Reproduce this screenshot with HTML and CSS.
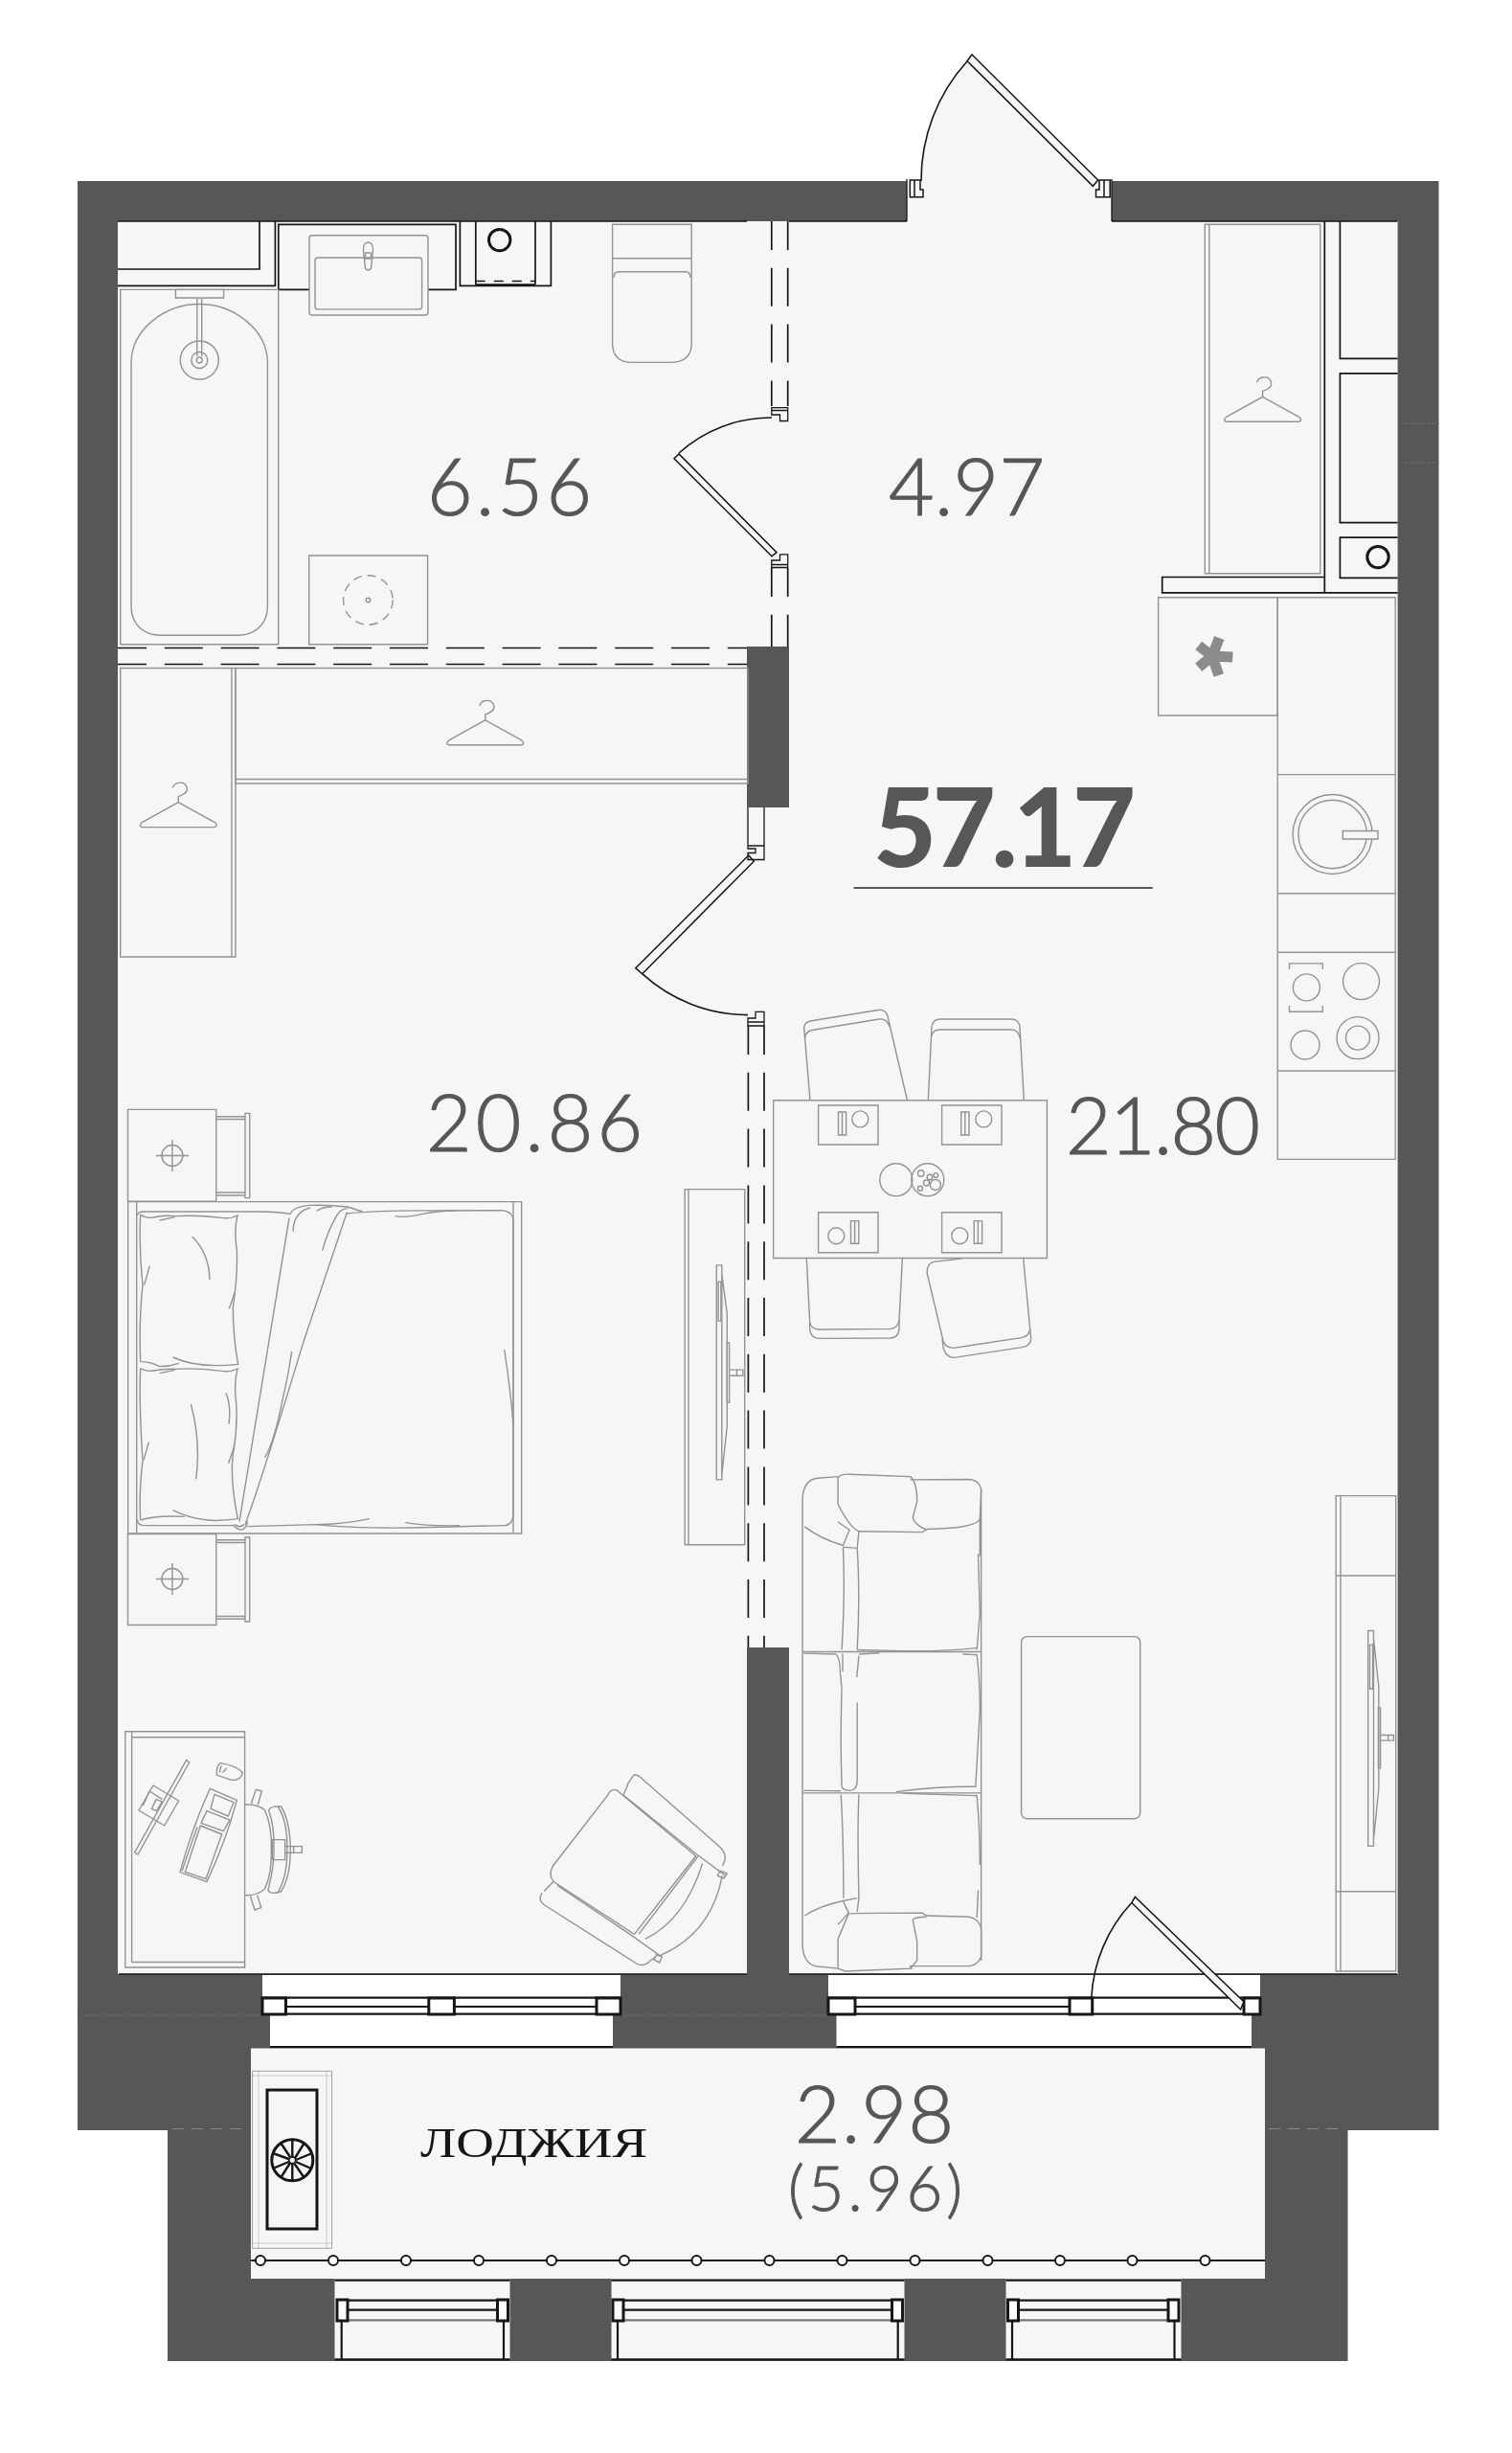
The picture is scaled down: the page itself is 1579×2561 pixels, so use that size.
FILE: index.html
```html
<!DOCTYPE html>
<html lang="ru">
<head>
    <meta charset="UTF-8">
    <title>Планировка</title>
    <link rel="stylesheet" href="styles.css">
</head>
<body>
<svg class="plan" viewBox="0 0 1579 2561" xmlns="http://www.w3.org/2000/svg">
    <defs>
        <g id="hanger">
            <path d="M0 0V-6Q10 -9 9 -15Q7 -22 -1 -20Q-5 -19 -6 -15M0 0L38 21Q42 25 38 26H-38Q-42 25 -38 21Z"/>
        </g>
    </defs>

    <!-- walls and floors -->
    <path class="wall" d="M81 189H1502.5V2224H1407.5V2465H175V2224H81Z"/>
    <rect class="floor" x="123" y="231" width="1336.6" height="830"/>
    <rect class="floor" x="123" y="1061" width="1336.6" height="1000"/>
    <rect class="floor" x="947" y="189" width="214" height="42"/>
    <path class="floor" d="M962 189A185 185 0 0 1 1010 64L1146 190Z"/>
    <rect class="wall" x="780" y="675" width="44" height="168"/>
    <rect class="wall" x="780" y="1720" width="44" height="341"/>

    <!-- window recesses -->
    <rect class="glass" x="274" y="2062" width="374" height="41"/>
    <rect class="glass" x="282" y="2103" width="358" height="34"/>
    <rect class="glass" x="865" y="2062" width="451" height="41"/>
    <rect class="glass" x="873.5" y="2103" width="433.5" height="34"/>
    <rect class="floor" x="262" y="2138.5" width="1059" height="240.5"/>
    <rect class="floor" x="349.5" y="2379" width="183" height="84"/>
    <rect class="floor" x="638.5" y="2379" width="306" height="84"/>
    <rect class="floor" x="1050.5" y="2379" width="183" height="84"/>

    <!-- hairlines left in the wall fill -->
    <g class="seam">
        <path d="M85 2104H273M650 2104H864"/>
        <path d="M1466 442H1503M1466 483H1503"/>
        <path d="M180 2222.5H256M1325 2222.5H1404" stroke-dasharray="12 8"/>
    </g>

    <!-- black lines: room edges, shafts, windows -->
    <g class="ink">
        <path d="M123 231H780M824 231H947M1161 231H1459M124 2061H780M824 2061H1459"/>
        <path d="M123 298.4H287.4V231M123 281H271V231"/>
        <rect x="290.8" y="234.3" width="185.2" height="68.1"/>
        <path d="M480.4 231V298.4H575.4V231M496.8 231V297M559 231V297M496.8 297H559"/>
        <path d="M496.8 293.5H559" stroke-dasharray="10 9"/>
        <circle class="heavy" cx="521.7" cy="250.6" r="11.2"/>
        <path d="M1383.3 231V618.8H1213.7V602.5H1383.3M1383.3 618.8H1459.6"/>
        <path d="M1459.6 374.3H1399.4V231M1459.6 389.8H1399.4V545.7H1459.6M1459.6 561.2H1399.4V603.3H1459.6"/>
        <circle class="heavy" cx="1439" cy="581.6" r="11.2"/>
    </g>

    <!-- interior partitions -->
    <g class="ink dashed">
        <path d="M805.8 231V424M822.7 231V424"/>
        <path d="M805.8 593V675M822.7 593V675"/>
        <path d="M123 676.5H780M123 693.5H780"/>
        <path d="M781.4 1071V1720M798 1071V1720"/>
    </g>
    <g class="door">
        <path class="swing" d="M806 436A144 144 0 0 0 709 473"/>
        <path class="leaf" d="M704 478.8L709 473.9L811 576.7L806 580.8Z"/>
        <path d="M805.8 425.7H822.7V439.5H814.5V433H805.8ZM805.8 428.5H822.7"/>
        <path d="M805.8 592.5H822.7V578.8H814.5V585H805.8ZM805.8 589.5H822.7"/>
        <path class="swing" d="M670.7 1016.7A164 164 0 0 0 781 1059.6"/>
        <path class="leaf" d="M781.8 893L787.3 899.2L670.7 1016.7L663.8 1010.6Z"/>
        <path d="M781 843V883H798V843M781 883H798V897.5H781V890.5H789V886H781Z"/>
        <path d="M781 1071V1063H789V1056.3H798V1071ZM781 1067H798"/>
        <path class="swing" d="M962 189A185 185 0 0 1 1010 64"/>
        <path class="leaf" d="M1015 57L1010 63.7L1141.3 194.3L1146.7 188Z"/>
        <path class="leaf" d="M950.3 188H961V198H964V205.7H950.3ZM955 188V205.7"/>
        <path class="leaf" d="M1148 188H1159.2V205.7H1144.5V198H1148ZM1153 188V205.7"/>
        <path d="M947 187V231M1161 187V231"/>
        <path class="swing" d="M1139.8 2085.7A157.4 157.4 0 0 1 1181.8 1986.5"/>
    </g>

    <!-- windows -->
    <g class="frame">
        <path d="M274 2085.7H648M274 2095H648M274 2102.7H648M282 2137H640"/>
        <path d="M865 2085.7H1316.5M865 2095H1140M865 2102.7H1316.5M873.5 2137H1307"/>
        <rect class="post" x="274" y="2086" width="24.5" height="17"/>
        <rect class="post" x="447.8" y="2086" width="26.6" height="17"/>
        <rect class="post" x="623" y="2086" width="25" height="17"/>
        <rect class="post" x="865" y="2086" width="28" height="17"/>
        <rect class="post" x="1117" y="2086" width="23.7" height="17"/>
        <rect class="post" x="1299" y="2086" width="17" height="17"/>

        <path d="M349.5 2380.7H532.5M638.5 2380.7H944.5M1050.5 2380.7H1233.5"/>
        <path d="M352 2401.7H531M640 2401.7H943M1052.5 2401.7H1231.5M352 2411.7H531M640 2411.7H943M1052.5 2411.7H1231.5"/>
        <path class="soft" d="M352 2422.3H531M640 2422.3H943M1052.5 2422.3H1231.5"/>
        <path d="M349.5 2463.3H532.5M638.5 2463.3H944.5M1050.5 2463.3H1233.5"/>
        <path d="M356.7 2423V2463M526 2423V2463M645 2423V2463M937.7 2423V2463M1057 2423V2463M1226.5 2423V2463"/>
        <rect class="post" x="352" y="2401" width="11" height="22"/>
        <rect class="post" x="519.5" y="2401" width="11" height="22"/>
        <rect class="post" x="640" y="2401" width="11" height="22"/>
        <rect class="post" x="931.5" y="2401" width="11" height="22"/>
        <rect class="post" x="1052.5" y="2401" width="11" height="22"/>
        <rect class="post" x="1220" y="2401" width="11" height="22"/>

        <path d="M262 2360H1321"/>
        <g class="rail">
            <circle cx="272" cy="2360" r="5"/><circle cx="348" cy="2360" r="5"/>
            <circle cx="424" cy="2360" r="5"/><circle cx="500" cy="2360" r="5"/>
            <circle cx="576" cy="2360" r="5"/><circle cx="652" cy="2360" r="5"/>
            <circle cx="727.5" cy="2360" r="5"/><circle cx="803.5" cy="2360" r="5"/>
            <circle cx="879.5" cy="2360" r="5"/><circle cx="955.5" cy="2360" r="5"/>
            <circle cx="1031.5" cy="2360" r="5"/><circle cx="1107" cy="2360" r="5"/>
            <circle cx="1182.5" cy="2360" r="5"/><circle cx="1258.5" cy="2360" r="5"/>
        </g>
    </g>
    <g class="door">
        <path class="leaf" d="M1185.4 1980.4L1181.8 1986.5L1295.6 2098L1298.8 2089.8Z"/>
    </g>

    <!-- boiler on the loggia -->
    <rect class="hair" x="263.6" y="2162.3" width="83" height="185"/>
    <path class="hair dotted" d="M270 2162.3V2347.3M341 2162.3V2347.3M263.6 2167H346.6M263.6 2342H346.6"/>
    <g class="ink">
        <rect class="heavy" x="279" y="2182" width="52" height="145"/>
        <circle class="heavy" cx="305.3" cy="2255.3" r="21.5"/>
        <circle cx="305.3" cy="2255.3" r="3.5"/>
        <path class="spokes" d="M305.3 2252V2234M308 2253L318 2237M309 2255L326 2248M309 2257L325 2264M307.5 2259L318 2274M305.3 2259V2277M303 2258L293 2274M301.5 2257L285 2264M301.5 2254L285 2248M303 2252L293 2237"/>
    </g>

    <!-- furniture, grey line work -->
    <g class="line">
        <!-- bath and basin -->
        <rect x="125.7" y="302.4" width="165" height="370.3"/>
        <path d="M137 378.8C137 344 172 317.5 208.2 317.5C244 317.5 279.4 344 279.4 378.8V633C279.4 652 266 663.3 248 663.3H168C150 663.3 137 652 137 633Z"/>
        <rect x="183.4" y="302.4" width="50.2" height="8.6"/>
        <path d="M205.8 311V372M210.7 311V372"/>
        <circle cx="208.3" cy="376" r="20"/>
        <circle cx="208.3" cy="376" r="8.5"/>
        <circle cx="208.3" cy="376" r="3"/>
        <rect class="cover" x="323" y="245.7" width="124" height="83.3" rx="3"/>
        <rect x="329" y="269" width="111.6" height="53.9" rx="3"/>
        <path d="M379.5 262Q379 253 384.5 253Q390 253 389.5 262L387.5 280Q384.5 284 381.5 280Z"/>
        <rect x="381.5" y="264" width="6" height="6"/>
        <!-- toilet -->
        <path d="M639.6 234.3H722.2V358Q722.2 378.4 700 378.4H660Q639.6 378.4 639.6 358Z"/>
        <path d="M639.6 269.8H722.2M641 290Q641 283.7 646 283.7H716Q721 283.7 721 290"/>
        <!-- washing machine -->
        <rect x="322.7" y="580" width="123.9" height="92.7"/>
        <circle cx="384.4" cy="626.5" r="25.8" stroke-dasharray="9 6"/>
        <circle cx="384.4" cy="626.5" r="2.3"/>

        <!-- wardrobes -->
        <rect x="125.7" y="697.5" width="120.3" height="301.5"/>
        <path d="M241.9 697.5V999"/>
        <rect x="246" y="697.5" width="535" height="120.5"/>
        <path d="M246 813.5H781"/>
        <use href="#hanger" x="506.8" y="751.8"/>
        <use href="#hanger" x="186.3" y="837.6"/>
        <rect x="1258.3" y="234.3" width="120.5" height="364.5"/>
        <path d="M1262.8 234.3V598.8"/>
        <use href="#hanger" x="1318.6" y="414.3"/>

        <!-- kitchen -->
        <rect x="1209.6" y="623.7" width="124.6" height="123.3"/>
        <rect x="1334.2" y="623.7" width="123" height="586.7"/>
        <path d="M1334.2 808.6H1457.2M1334.2 932.7H1457.2M1334.2 994.3H1457.2M1334.2 1118H1457.2"/>
        <circle cx="1391.6" cy="871" r="41.5"/>
        <circle cx="1391.6" cy="871" r="35.7"/>
        <rect class="cover" x="1402.3" y="867.5" width="36.7" height="8.5"/>
        <circle cx="1364.4" cy="1030.9" r="14"/>
        <path d="M1346.5 1012V1005.9H1381.3V1012M1346.5 1050V1056.3H1381.3V1050"/>
        <circle cx="1421.5" cy="1024.6" r="19"/>
        <circle cx="1363" cy="1091" r="15"/>
        <circle cx="1418" cy="1083.6" r="22"/>
        <circle cx="1418" cy="1083.6" r="12.5"/>

        <!-- dining -->
        <path d="M846 1149L840 1077Q838 1068 846 1066L917 1054.5Q925 1053.5 927 1061L947.5 1149"/>
        <path d="M840.5 1084Q841 1077 848 1075.5L918 1064Q926 1063 929 1072"/>
        <path d="M969.3 1149L973 1072Q974 1064 982 1064H1056Q1064 1064 1065 1072L1069.3 1149"/>
        <path d="M973 1082Q974 1075 981 1075H1056Q1064 1075 1065.5 1085"/>
        <rect x="807.7" y="1148.8" width="285.7" height="164.7"/>
        <rect x="854.6" y="1154" width="62.4" height="41"/>
        <rect x="983.6" y="1154" width="62.4" height="41"/>
        <rect x="854.6" y="1265.7" width="62.4" height="42"/>
        <rect x="983.6" y="1265.7" width="62.4" height="42"/>
        <path d="M875.5 1161H883.6V1185H875.5ZM879.5 1161V1185M1003.7 1161H1012V1185H1003.7ZM1007.8 1161V1185"/>
        <path d="M888.5 1274.6H896.8V1298.3H888.5ZM892.6 1274.6V1298.3M1017.2 1274.6H1025.6V1298.3H1017.2ZM1021.4 1274.6V1298.3"/>
        <circle cx="898.3" cy="1168.4" r="8.5"/>
        <circle cx="1027.3" cy="1168.4" r="8.5"/>
        <circle cx="873.3" cy="1290.3" r="8.5"/>
        <circle cx="1002.3" cy="1290.3" r="8.5"/>
        <circle cx="935.8" cy="1231.8" r="17"/>
        <circle cx="968.8" cy="1231.8" r="17"/>
        <circle cx="961.7" cy="1225" r="3.2"/>
        <circle cx="971" cy="1229" r="2.8"/>
        <circle cx="977.3" cy="1227" r="2.4"/>
        <circle cx="967.5" cy="1235" r="3"/>
        <circle cx="961" cy="1240.7" r="2.5"/>
        <circle cx="976.9" cy="1237" r="5.5"/>
        <g transform="translate(830 1300) scale(.33333)">
            <path d="M37 42L47 240Q50 262 75 264L300 262Q322 260 327 235L337 42"/>
            <path d="M47 240V262Q48 290 75 292L300 291Q325 290 327 262V235"/>
            <path d="M522 42L435 52Q412 58 415 90L465 300Q470 320 498 322L710 290Q735 285 737 262L716 42"/>
            <path d="M462 295L466 325Q475 352 500 352L712 320Q740 315 740 290L737 262"/>
        </g>

        <!-- bedside tables -->
        <rect x="133.5" y="1158.4" width="92.3" height="95.9"/>
        <path d="M225.8 1165.7H256M225.8 1168.5H256M225.8 1248H256M225.8 1245H256"/>
        <rect x="256" y="1162.4" width="4.7" height="88.2"/>
        <circle cx="179.9" cy="1206.5" r="11"/>
        <path d="M163 1206.5H197M179.9 1190V1223"/>
        <rect x="133.5" y="1601.5" width="92.3" height="95"/>
        <path d="M225.8 1607.7H256M225.8 1610.5H256M225.8 1690.3H256M225.8 1687.5H256"/>
        <rect x="256" y="1605" width="4.7" height="88"/>
        <circle cx="179.9" cy="1648.5" r="11"/>
        <path d="M163 1648.5H197M179.9 1632V1665"/>

        <!-- bed -->
        <g transform="translate(130 1245) scale(.33333)">
            <rect x="11" y="29" width="1233" height="1039"/>
            <path d="M38 29V1068M1218 29V1068"/>
            <path d="M40 72Q42 60 60 60H420Q490 60 520 68"/>
            <path d="M40 1025Q42 1042 60 1043H340"/>
            <path d="M695 66Q800 55 1000 57L1180 56Q1218 58 1218 90V1010Q1216 1042 1190 1043L900 1050Q700 1052 600 1040L385 1046"/>
            <path d="M520 68Q525 45 580 40Q640 38 700 45L745 60"/>
            <path d="M516 80L360 1030"/>
            <path d="M697 62L560 470Q430 900 378 1040"/>
            <path d="M338 1040Q355 1060 372 1055Q385 1045 385 1030M345 1040Q360 1052 375 1040"/>
            <path d="M528 122Q530 60 582 48M602 58Q620 45 650 45M620 182Q640 110 668 68Q680 50 700 50"/>
            <path d="M848 74Q880 80 930 68Q990 56 1040 57M1190 492Q1210 620 1218 730M524 498Q510 590 497 640Q470 780 440 830M768 1022Q680 1040 600 1040M880 1034Q960 1046 1050 1043"/>
            <path d="M50 530Q45 400 57 290Q45 180 50 70Q70 82 90 78Q120 70 160 74Q230 70 310 80Q335 82 354 72Q342 120 352 180Q355 260 340 360Q340 450 356 538Q230 552 152 516M50 530Q80 530 110 545Q140 545 170 535"/>
            <path d="M110 87L158 77M212 138Q265 190 267 273M79 230L62 290M346 312L328 364"/>
            <path d="M50 1026Q45 940 57 840Q45 660 50 552Q70 562 90 558Q120 552 160 553Q230 548 310 560Q335 562 354 552Q342 600 350 660Q355 740 340 820Q330 900 355 1022Q300 1030 260 1026Q200 1020 152 995M50 1026Q100 1010 188 1015"/>
            <path d="M110 566L158 556M318 628Q335 670 327 725M208 663Q240 780 224 898M76 782L60 838M344 795L326 848"/>
        </g>

        <!-- bedroom tv unit -->
        <rect x="715.2" y="1241.6" width="62.5" height="371.2"/>
        <path d="M719 1241.6V1612.8"/>
        <g transform="translate(100 1300) scale(.45914 .51020)">
            <path d="M1412 41H1424V480H1412ZM1424 60L1436 140V370L1424 470"/>
            <path d="M1416 75H1422V155H1416ZM1436 200H1441V322H1436ZM1441 255H1472V267H1441ZM1458 255V267"/>
        </g>

        <!-- desk -->
        <rect x="130.8" y="1807.7" width="124.8" height="246.3"/>
        <path d="M137.6 1807.7V2048.5H255.6M137.6 1813.8H255.6"/>
        <g transform="translate(130 1820) scale(.33333)">
            <path d="M194 53L203 60L42 348L32 342Z"/>
            <path d="M90 132L170 180L125 258L45 210Z" stroke-linejoin="round"/>
            <path d="M78 150L118 175M58 195L78 150M100 175L118 183L100 212L85 205Z"/>
            <path d="M268 142L352 178Q320 300 258 434L174 404Q210 270 268 142Z"/>
            <path d="M282 160L342 185L325 228L270 205Z"/>
            <path d="M258 212L330 240L310 275L240 250Z"/>
            <path d="M238 258L305 285L255 425L190 403ZM228 262L180 400"/>
            <path d="M300 62Q350 70 370 92Q365 118 335 115L290 100Q285 75 300 62ZM303 70L298 92M320 78L308 92"/>
            <path d="M377 192Q420 190 440 210Q462 260 460 330Q462 410 440 455Q420 478 377 476"/>
            <path d="M452 210Q458 195 490 198Q518 240 520 330Q520 420 490 465Q455 475 450 460Q470 380 468 330Q470 260 452 210ZM480 198Q510 240 510 330Q510 420 480 468"/>
            <path d="M463 302H503V365H463ZM503 323H556V343H503ZM530 323V343"/>
            <path d="M397 190L412 145L430 150L418 192M394 478L408 522L428 515L416 476"/>
        </g>

        <!-- armchair -->
        <g transform="translate(100 1300) scale(.45914 .51020)">
            <path d="M1185 1115Q1170 1112 1165 1125L1040 1270Q1028 1290 1042 1303L1225 1410L1365 1250Z"/>
            <path d="M1222 1086Q1230 1080 1240 1090L1420 1232Q1440 1250 1425 1270M1200 1125L1365 1245L1432 1290M1208 1105L1222 1086M1200 1125L1210 1105"/>
            <path d="M1015 1325Q1005 1340 1020 1350L1230 1470Q1245 1478 1260 1465L1275 1455M1040 1303L1020 1322M1050 1310L1215 1410L1285 1455"/>
            <path d="M1280 1455Q1400 1410 1425 1290M1250 1420Q1340 1380 1380 1265M1235 1410L1370 1250"/>
            <path d="M1420 1280L1436 1286L1428 1296L1414 1290ZM1275 1452L1288 1456L1282 1468L1270 1462Z"/>
        </g>

        <!-- sofa and coffee table -->
        <g transform="translate(780 1500) scale(.44643 .40816)">
            <path d="M130 160V1300Q132 1350 165 1355L213 1360M130 160Q132 110 165 106L213 102"/>
            <path d="M548 135V1340"/>
            <path d="M213 105Q218 95 240 96L382 102Q398 115 398 165L388 207Q392 225 420 238L410 244L262 242Q240 232 213 172Z"/>
            <path d="M382 110L520 109Q545 112 548 135L545 210Q535 235 420 236"/>
            <path d="M135 230Q170 260 225 278L240 238L213 218M225 282L258 285L262 242"/>
            <path d="M225 282Q230 400 222 545M258 285Q265 400 258 545M545 210V305M541 300L545 450L538 545"/>
            <path d="M258 545L365 548Q460 550 538 540"/>
            <path d="M130 550H548M130 911H548"/>
            <path d="M133 554L208 556Q218 565 218 600L222 645M224 555V600M262 556L310 553M257 615L262 560"/>
            <path d="M505 556L538 558Q545 620 545 700L535 895Q440 895 350 908"/>
            <path d="M258 680V880Q258 905 240 905Q225 905 222 895Q218 780 222 645"/>
            <path d="M133 905Q160 905 220 906"/>
            <path d="M365 912L538 918Q545 1000 545 1095M541 1160L538 1230"/>
            <path d="M220 915Q226 1020 226 1180M262 915Q258 1000 262 1180L258 1215"/>
            <path d="M238 1220Q250 1218 410 1218L420 1225L520 1228Q545 1235 548 1260V1330Q540 1352 520 1354H382L385 1360L230 1367L213 1360V1285Z"/>
            <path d="M388 1235L398 1290V1340L382 1360M388 1235Q395 1228 420 1228"/>
            <path d="M135 1225Q170 1200 225 1187L238 1218L213 1248M225 1187L258 1180"/>
        </g>
        <rect x="1066.6" y="1708.6" width="124.1" height="190.2" rx="6"/>

        <!-- living room tv unit -->
        <rect x="1395.2" y="1561.6" width="62.5" height="496.4"/>
        <path d="M1400 1561.6V2058M1395.2 1645H1457.7M1395.2 1974.7H1457.7"/>
        <g transform="translate(780 1500) scale(.44643 .40816)">
            <path d="M1453 496H1466V1047H1453ZM1466 515L1478 640V900L1466 1030"/>
            <path d="M1457 532H1464V645H1457ZM1477 693H1482V848H1477ZM1482 763H1513V777H1482ZM1500 763V777"/>
        </g>
    </g>

    <path class="star" d="M1266 685L1287.3 686M1266 685L1273.3 666M1266 685L1251.7 674M1266 685L1251.7 696.7M1266 685L1272.7 705"/>

    <!-- labels -->
    <text class="area" x="446" y="538" textLength="172">6.56</text>
    <text class="area" x="928" y="538" textLength="163">4.97</text>
    <text class="area" x="445" y="1202" textLength="226">20.86</text>
    <text class="area" x="1113" y="1205" textLength="203">21.80</text>
    <text class="total" x="912" y="905" textLength="274">57.17</text>
    <path class="rule" d="M891.6 927H1203.7"/>
    <text class="room-name" x="439" y="2252" textLength="237" lengthAdjust="spacingAndGlyphs">ЛОДЖИЯ</text>
    <text class="area" x="830" y="2237" textLength="166">2.98</text>
    <text class="area-full" x="823" y="2308" textLength="182">(5.96)</text>
</svg>
</body>
</html>
```

FILE: styles.css
```css
body {
    margin: 0;
    background-color: #fff;
}
.plan {
    display: block;
    width: 1579px;
    height: 2561px;
}
.plan path, .plan rect, .plan circle {
    vector-effect: non-scaling-stroke;
}
.wall {
    fill: #575757;
}
.floor {
    fill: #f6f6f6;
}
.glass {
    fill: #fff;
}
.seam {
    fill: none;
    stroke: #8a8a8a;
    stroke-width: 1;
    stroke-dasharray: 1 2;
}
.ink, .ink path, .ink rect, .ink circle {
    fill: none;
    stroke: #161616;
    stroke-width: 1.7;
}
.ink .heavy {
    stroke-width: 3;
}
.ink .spokes {
    stroke-width: 2.4;
}
.dashed path {
    stroke-dasharray: 40 18.8;
    stroke-dashoffset: 10;
}
.door path {
    fill: none;
    stroke: #161616;
    stroke-width: 1.3;
}
.door .leaf {
    fill: #f6f6f6;
    stroke-width: 1.5;
}
.door .swing {
    stroke-width: 1.6;
}
.frame path {
    fill: none;
    stroke: #161616;
    stroke-width: 2.2;
}
.frame .soft {
    stroke: #777;
}
.frame .post {
    fill: #fff;
    stroke: #161616;
    stroke-width: 3;
}
.rail circle {
    fill: #fff;
    stroke: #161616;
    stroke-width: 2;
}
.hair {
    fill: none;
    stroke: #8a8a8a;
    stroke-width: .8;
}
.dotted {
    stroke-dasharray: 1 1;
}
.line path, .line rect, .line circle, .line use {
    fill: none;
    stroke: #939393;
    stroke-width: 1.4;
}
.line .cover {
    fill: #f6f6f6;
}
.star {
    fill: none;
    stroke: #8c8c8c;
    stroke-width: 11;
}
.area, .area-full, .total {
    font-family: Lato, sans-serif;
    fill: #575757;
}
.area {
    font-size: 82px;
    font-weight: 300;
    stroke: #575757;
    stroke-width: 1.2;
}
.area-full {
    font-size: 65px;
    font-weight: 300;
    stroke: #575757;
    stroke-width: 1;
}
.total {
    font-size: 114px;
    font-weight: 900;
}
.rule {
    fill: none;
    stroke: #575757;
    stroke-width: 2;
}
.room-name {
    font-family: "Liberation Serif", serif;
    font-size: 45px;
    fill: #161616;
}
```
